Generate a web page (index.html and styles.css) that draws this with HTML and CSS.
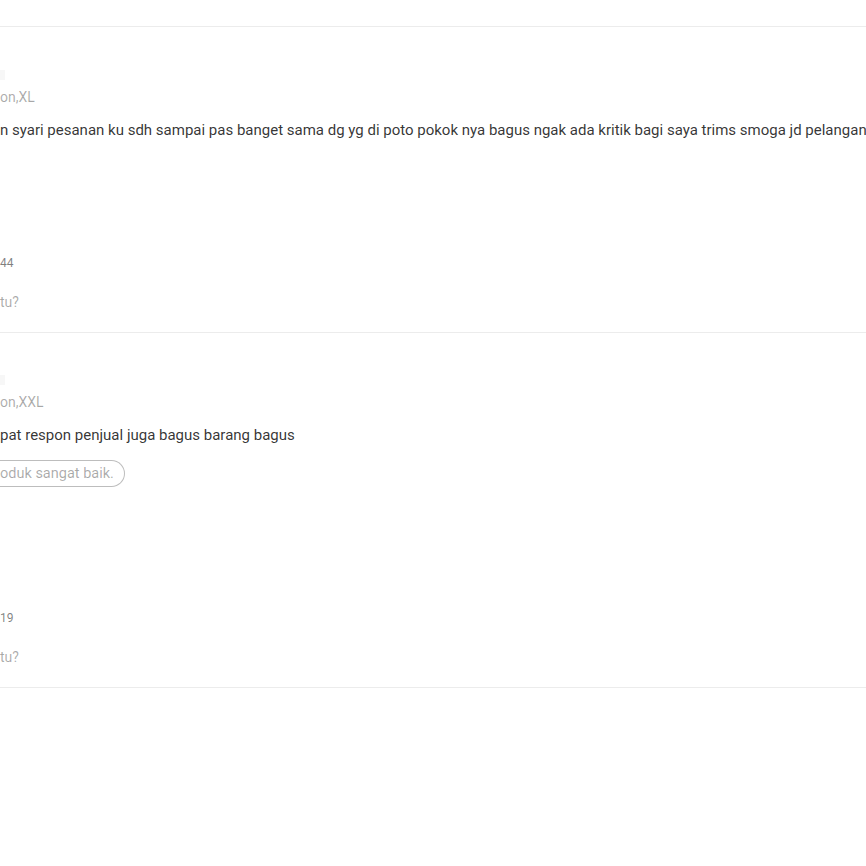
FILE: index.html
```html
<!DOCTYPE html>
<html lang="id">
<head>
    <meta charset="UTF-8">
    <meta name="viewport" content="width=device-width, initial-scale=1.0">
    <title>Penilaian Produk</title>
    <link rel="stylesheet" href="styles.css">
</head>
<body>
    <div class="reviews">
        <div class="review">
            <div class="review-stars"></div>
            <div class="review-variation">on,XL</div>
            <div class="review-comment">n syari pesanan ku sdh sampai pas banget sama dg yg di poto pokok nya bagus ngak ada kritik bagi saya trims smoga jd pelangan</div>
            <div class="review-media media-tall"></div>
            <div class="review-date">44</div>
            <div class="review-helpful">tu?</div>
        </div>

        <div class="review">
            <div class="review-stars"></div>
            <div class="review-variation">on,XXL</div>
            <div class="review-comment">pat respon penjual juga bagus barang bagus</div>
            <div class="review-tags">
                <span class="tag">oduk sangat baik.</span>
            </div>
            <div class="review-media media-short"></div>
            <div class="review-date">19</div>
            <div class="review-helpful">tu?</div>
        </div>
    </div>
</body>
</html>
```

FILE: styles.css
```css
:root {
    --text: rgba(0, 0, 0, 0.8);
    --muted: rgba(0, 0, 0, 0.5);
    --faint: rgba(0, 0, 0, 0.34);
    --line: #ececec;
}

* {
    margin: 0;
    padding: 0;
    box-sizing: border-box;
}

body {
    font-family: Roboto, "Liberation Sans", sans-serif;
    background: white;
    color: var(--text);
    overflow: hidden;
}

.reviews {
    margin-top: 26px;
    border-top: 1px solid var(--line);
}

.review {
    padding-bottom: 20px;
    border-bottom: 1px solid var(--line);
    white-space: nowrap;
}

.review + .review .review-stars {
    margin-top: 42px;
}

.review-stars {
    width: 5px;
    height: 10px;
    margin-top: 43px;
    background: #f7f7f7;
}

.review-variation {
    margin-top: 9px;
    font-size: 14px;
    line-height: 16px;
    color: var(--faint);
}

.review-comment {
    margin-top: 15px;
    font-size: 15px;
    line-height: 20px;
}

.review-tags {
    margin-top: 15px;
    display: flex;
}

.tag {
    display: inline-block;
    height: 27px;
    line-height: 25px;
    padding-right: 10px;
    border: 1px solid rgba(0, 0, 0, 0.26);
    border-left: none;
    border-radius: 0 14px 14px 0;
    font-size: 14.5px;
    color: var(--faint);
}

.media-tall {
    height: 116px;
}

.media-short {
    height: 124px;
}

.review-date {
    font-size: 12px;
    line-height: 14px;
    color: var(--muted);
}

.review-helpful {
    margin-top: 22px;
    font-size: 14px;
    line-height: 20px;
    color: var(--faint);
}
```
